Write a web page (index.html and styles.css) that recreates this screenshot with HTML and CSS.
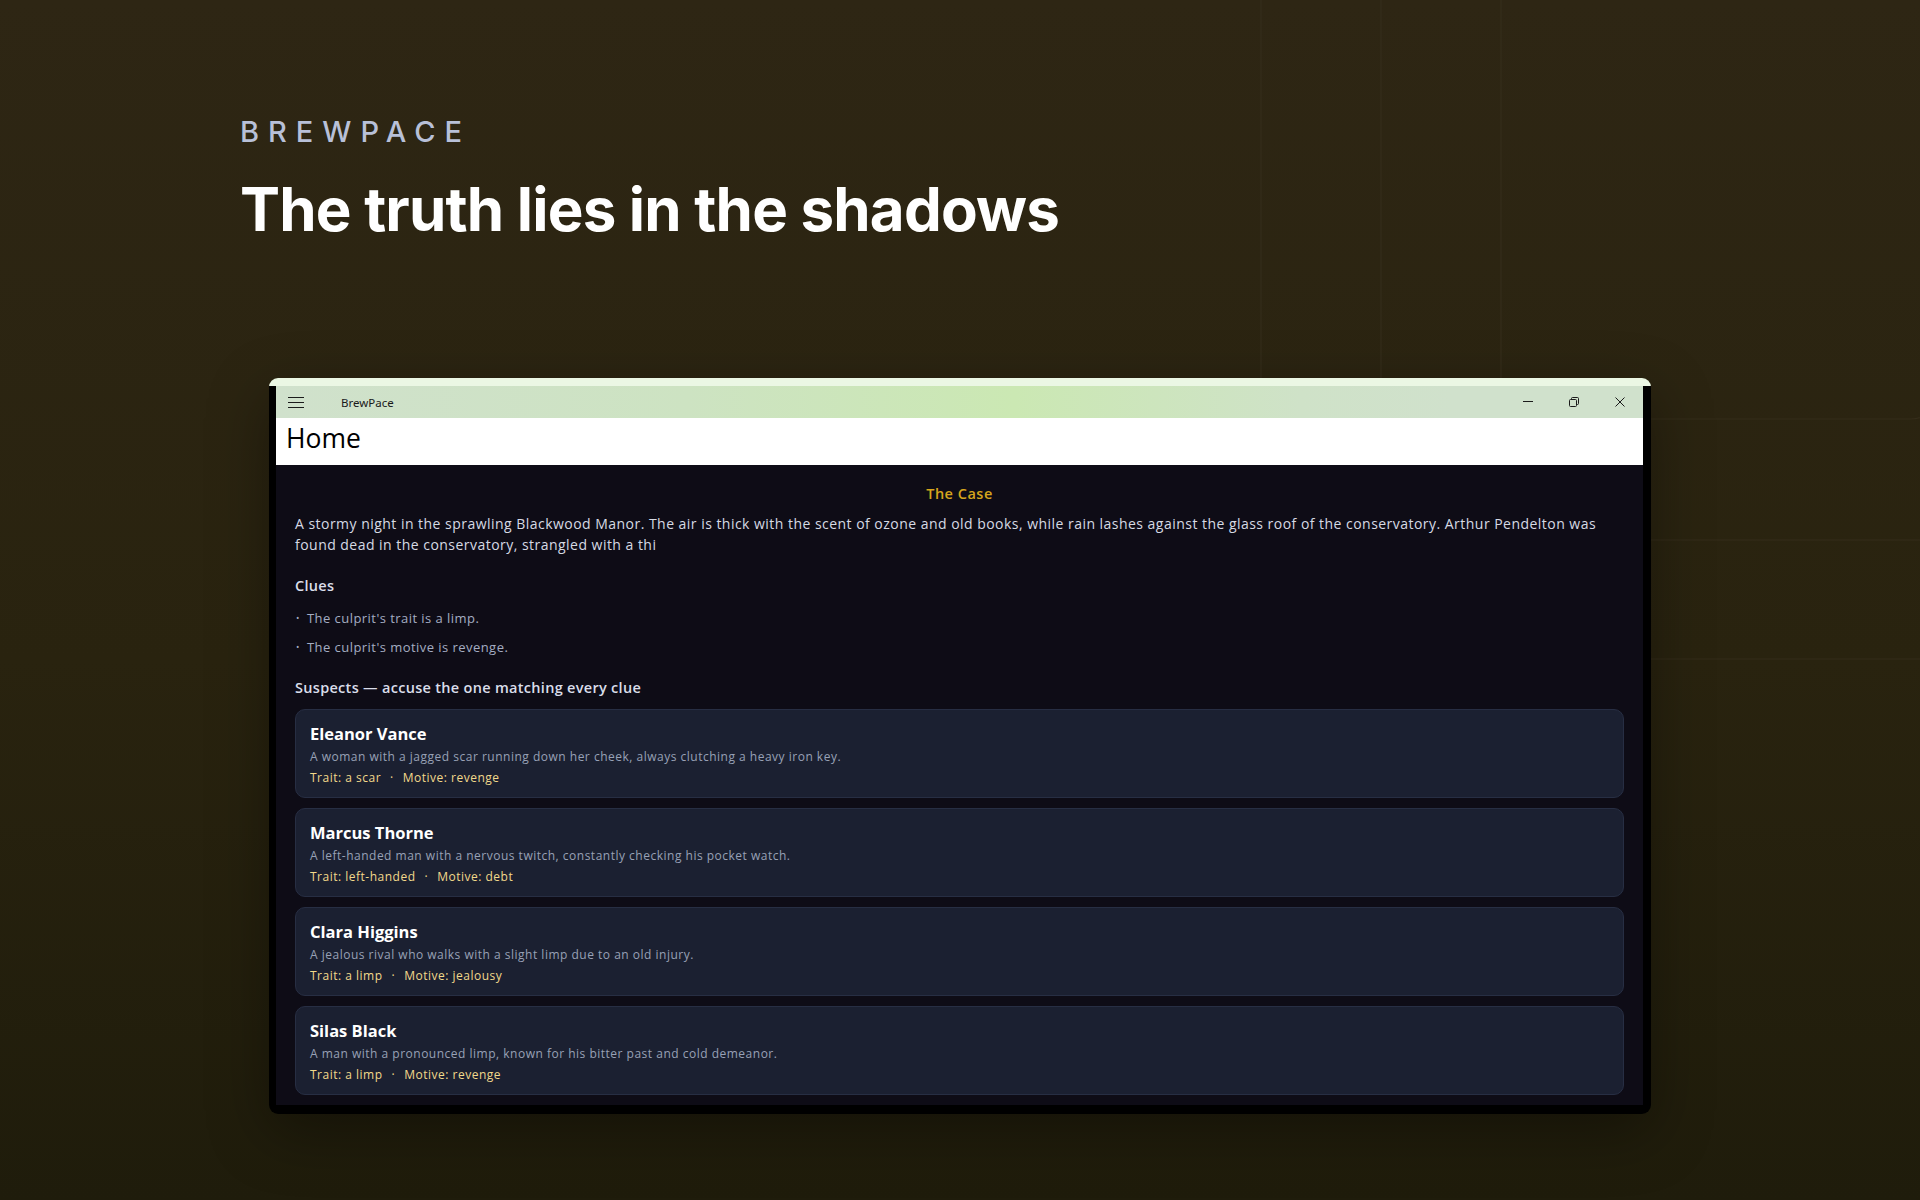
FILE: index.html
```html
<!DOCTYPE html>
<html lang="en">
<head>
<meta charset="utf-8">
<title>BrewPace — The truth lies in the shadows</title>
<link rel="stylesheet" href="styles.css">
</head>
<body>
  <svg class="backdrop" width="1920" height="1200" viewBox="0 0 1920 1200" aria-hidden="true">
    <g fill="none" stroke="#352d1b" stroke-width="1.2">
      <line x1="1261" y1="0" x2="1261" y2="430"/>
      <line x1="1381" y1="0" x2="1381" y2="430"/>
      <rect x="1501" y="-40" width="440" height="459" rx="30"/>
      <line x1="1400" y1="540" x2="1920" y2="540"/>
      <line x1="1400" y1="659" x2="1920" y2="659"/>
    </g>
  </svg>

  <main class="page">
    <header class="hero">
      <div class="eyebrow">BREWPACE</div>
      <h1 class="headline">The truth lies in the shadows</h1>
    </header>

    <section class="window">
      <div class="titlebar">
        <button class="tb-menu" aria-label="Menu">
          <svg width="16" height="11" viewBox="0 0 16 11"><g stroke="#1b1b1b" stroke-width="1"><line x1="0" y1="0.5" x2="16" y2="0.5"/><line x1="0" y1="5.5" x2="16" y2="5.5"/><line x1="0" y1="10.5" x2="16" y2="10.5"/></g></svg>
        </button>
        <span class="tb-title">BrewPace</span>
        <div class="tb-controls">
          <button class="tb-btn" aria-label="Minimize">
            <svg width="10" height="10" viewBox="0 0 10 10"><line x1="0" y1="4.5" x2="10" y2="4.5" stroke="#1b1b1b" stroke-width="1"/></svg>
          </button>
          <button class="tb-btn" aria-label="Restore">
            <svg width="10" height="10" viewBox="0 0 10 10" fill="none" stroke="#1b1b1b" stroke-width="1"><rect x="0.5" y="2.5" width="7" height="7" rx="1"/><path d="M2.5 2.5 V1.5 Q2.5 0.5 3.5 0.5 H8.5 Q9.5 0.5 9.5 1.5 V6.5 Q9.5 7.5 8.5 7.5 H7.5"/></svg>
          </button>
          <button class="tb-btn" aria-label="Close">
            <svg width="10" height="10" viewBox="0 0 10 10"><path d="M0.5 0.5 L9.5 9.5 M9.5 0.5 L0.5 9.5" stroke="#1b1b1b" stroke-width="1"/></svg>
          </button>
        </div>
      </div>

      <div class="nav-header">Home</div>

      <div class="content">
        <h2 class="case-title">The Case</h2>
        <p class="case-text">A stormy night in the sprawling Blackwood Manor. The air is thick with the scent of ozone and old books, while rain lashes against the glass roof of the conservatory. Arthur Pendelton was found dead in the conservatory, strangled with a thi</p>

        <h3 class="section-title clues-title">Clues</h3>
        <ul class="clues">
          <li><span class="bullet">•</span>The culprit's trait is a limp.</li>
          <li><span class="bullet">•</span>The culprit's motive is revenge.</li>
        </ul>

        <h3 class="section-title suspects-title">Suspects — accuse the one matching every clue</h3>
        <div class="suspects">
          <article class="card">
            <div class="card-name">Eleanor Vance</div>
            <div class="card-desc">A woman with a jagged scar running down her cheek, always clutching a heavy iron key.</div>
            <div class="card-meta">Trait: a scar<span class="sep">·</span>Motive: revenge</div>
          </article>
          <article class="card">
            <div class="card-name">Marcus Thorne</div>
            <div class="card-desc">A left-handed man with a nervous twitch, constantly checking his pocket watch.</div>
            <div class="card-meta">Trait: left-handed<span class="sep">·</span>Motive: debt</div>
          </article>
          <article class="card">
            <div class="card-name">Clara Higgins</div>
            <div class="card-desc">A jealous rival who walks with a slight limp due to an old injury.</div>
            <div class="card-meta">Trait: a limp<span class="sep">·</span>Motive: jealousy</div>
          </article>
          <article class="card">
            <div class="card-name">Silas Black</div>
            <div class="card-desc">A man with a pronounced limp, known for his bitter past and cold demeanor.</div>
            <div class="card-meta">Trait: a limp<span class="sep">·</span>Motive: revenge</div>
          </article>
        </div>
      </div>
    </section>
  </main>
</body>
</html>
```

FILE: styles.css
```css
* { box-sizing: border-box; }

html, body {
  margin: 0;
  padding: 0;
}

body {
  width: 1920px;
  height: 1200px;
  overflow: hidden;
  position: relative;
  background: linear-gradient(180deg, #2e2614 0%, #29230f 55%, #1f1c0b 100%);
  font-family: "Open Sans", "Noto Sans", sans-serif;
}

/* faint outline shapes behind the page */
.backdrop {
  position: absolute;
  top: 0;
  left: 0;
  z-index: 0;
  pointer-events: none;
}

.page {
  position: relative;
  z-index: 1;
}

/* ---------- hero ---------- */
.hero {
  padding: 117px 0 0 240px;
}

.eyebrow {
  font-family: Inter, "Liberation Sans", sans-serif;
  font-weight: 500;
  font-size: 29px;
  line-height: 29px;
  letter-spacing: 9px;
  color: #b8c0d8;
}

.headline {
  margin: 33px 0 0;
  font-family: Inter, "Liberation Sans", sans-serif;
  font-weight: 700;
  font-size: 60px;
  line-height: 60px;
  letter-spacing: -0.8px;
  color: #ffffff;
}

/* ---------- app window ---------- */
.window {
  margin: 139px 0 0 269px;
  width: 1382px;
  height: 736px;
  padding: 8px 8px 9px 7px;
  border-radius: 9px;
  background: linear-gradient(180deg, #ebf7e4 0, #ebf7e4 8px, #000 8px);
  box-shadow: 0 18px 60px rgba(0, 0, 0, 0.35);
  display: flex;
  flex-direction: column;
}

.titlebar {
  height: 32px;
  flex: none;
  display: flex;
  align-items: center;
  background: linear-gradient(90deg, #d0e1cc 0%, #cde3c2 30%, #cbe8b3 54%, #cfe2c8 75%, #d0e1cc 86%, #d0e1cc 100%);
}

.tb-menu,
.tb-btn {
  border: 0;
  padding: 0;
  margin: 0;
  background: transparent;
  height: 32px;
  display: flex;
  align-items: center;
  justify-content: center;
}

.tb-menu {
  width: 40px;
}

.tb-menu svg { display: block; }

.tb-title {
  margin-left: 25px;
  font-family: "Noto Sans", "Open Sans", sans-serif;
  font-size: 11.5px;
  color: #1a1a1a;
}

.tb-controls {
  margin-left: auto;
  display: flex;
}

.tb-btn {
  width: 46px;
}

.tb-btn svg { display: block; }

.nav-header {
  height: 47px;
  flex: none;
  background: #ffffff;
  padding-left: 10px;
  font-family: "Open Sans", "Noto Sans", sans-serif;
  font-weight: 500;
  font-size: 26.5px;
  line-height: 40px;
  color: #000000;
}

/* ---------- page body ---------- */
.content {
  flex: 1;
  background: #0e0c16;
  padding: 19px 19px 9px;
  display: flex;
  flex-direction: column;
  overflow: hidden;
}

.case-title {
  margin: 0;
  text-align: center;
  font-size: 14.5px;
  font-weight: 600;
  line-height: 20px;
  letter-spacing: 0.5px;
  color: #d6a51d;
}

.case-text {
  margin: 9px 0 0;
  font-size: 14px;
  line-height: 21px;
  letter-spacing: 0.47px;
  color: #d6dae4;
}

.section-title {
  margin: 0;
  font-size: 14.5px;
  font-weight: 600;
  line-height: 22px;
  letter-spacing: 0.3px;
  color: #dadeea;
}

.clues-title {
  margin-top: 20px;
}

.clues {
  list-style: none;
  margin: 11px 0 0;
  padding: 0;
  display: flex;
  flex-direction: column;
  gap: 9px;
}

.clues li {
  font-size: 13px;
  line-height: 20px;
  letter-spacing: 0.45px;
  color: #a4adc2;
  display: flex;
  align-items: center;
}

.bullet {
  font-size: 9px;
  width: 11px;
  margin-left: 1px;
  letter-spacing: 0;
  color: #a4adc2;
}

.suspects-title {
  margin-top: 20px;
}

.suspects {
  margin-top: 10px;
  display: flex;
  flex-direction: column;
  gap: 10px;
}

.card {
  height: 89px;
  background: #1b2031;
  border: 1px solid #272e43;
  border-radius: 10px;
  padding: 12px 14px 9px;
}

.card-name {
  font-size: 16.5px;
  font-weight: 700;
  line-height: 24px;
  color: #ffffff;
}

.card-desc {
  margin-top: 2px;
  font-size: 12px;
  line-height: 18px;
  letter-spacing: 0.5px;
  color: #98a1b6;
}

.card-meta {
  margin-top: 3px;
  font-size: 12px;
  line-height: 18px;
  letter-spacing: 0.5px;
  color: #f2d98b;
}

.sep {
  margin: 0 9px;
}
```
